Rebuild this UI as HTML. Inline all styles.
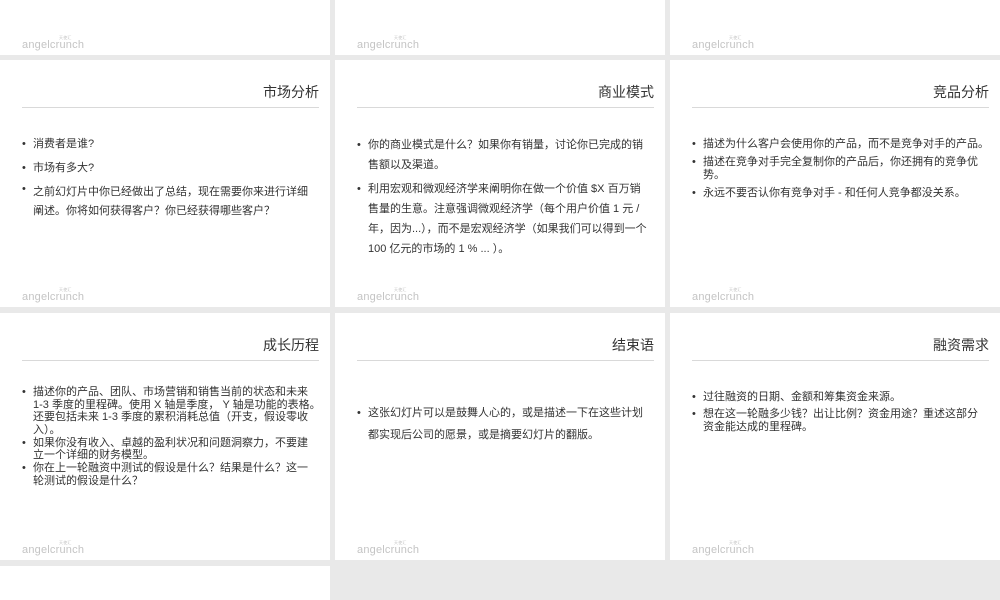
<!DOCTYPE html>
<html><head><meta charset="utf-8"><style>
*{margin:0;padding:0;box-sizing:border-box}
html,body{width:1000px;height:600px;overflow:hidden}
body{background:#e9e9e9;position:relative;font-family:"Liberation Sans","Noto Sans CJK SC",sans-serif;color:#333}
.s{position:absolute;width:330px;height:247px;background:#fff}
.t{position:absolute;right:11px;top:22px;font-size:14px;color:#333}
.ln{position:absolute;left:22px;right:11px;top:47px;height:1px;background:#d9d9d9}
.logo{position:absolute;left:22px;bottom:4px;font-size:11px;color:#c4c4c4;letter-spacing:0.2px}
.logo i{position:absolute;left:37px;top:-4px;font-size:4px;font-style:normal}
ul{position:absolute;left:22px;right:8px;list-style:none;font-size:11px}
li{position:relative;padding-left:11px}
li:before{content:"•";position:absolute;left:0;top:0}
.a li{line-height:24px}
.b li{line-height:13px;margin-bottom:4px;white-space:nowrap}
.c li{line-height:12.5px;margin-bottom:0.5px;white-space:nowrap}
</style></head><body>
<div class="s" style="left:0;top:-192px"><div class="logo">angelcrunch<i>天使汇</i></div></div>
<div class="s" style="left:335px;top:-192px"><div class="logo">angelcrunch<i>天使汇</i></div></div>
<div class="s" style="left:670px;top:-192px"><div class="logo">angelcrunch<i>天使汇</i></div></div>

<div class="s" style="left:0;top:60px"><div class="t">市场分析</div><div class="ln"></div>
<ul class="a" style="top:72px;right:14px"><li>消费者是谁?</li><li>市场有多大?</li><li style="line-height:19px;padding-top:3px">之前幻灯片中你已经做出了总结，现在需要你来进行详细阐述。你将如何获得客户？你已经获得哪些客户？</li></ul>
<div class="logo">angelcrunch<i>天使汇</i></div></div>

<div class="s" style="left:335px;top:60px"><div class="t">商业模式</div><div class="ln"></div>
<ul style="top:75px;right:14px"><li style="line-height:20px;margin-bottom:4px">你的商业模式是什么？如果你有销量，讨论你已完成的销售额以及渠道。</li><li style="line-height:20px">利用宏观和微观经济学来阐明你在做一个价值 $X 百万销售量的生意。注意强调微观经济学（每个用户价值 1 元 / 年，因为...），而不是宏观经济学（如果我们可以得到一个 100 亿元的市场的 1 % ... ）。</li></ul>
<div class="logo">angelcrunch<i>天使汇</i></div></div>

<div class="s" style="left:670px;top:60px"><div class="t">竞品分析</div><div class="ln"></div>
<ul class="b" style="top:78px;right:2px"><li style="margin-bottom:5px">描述为什么客户会使用你的产品，而不是竞争对手的产品。</li><li style="margin-bottom:5px">描述在竞争对手完全复制你的产品后，你还拥有的竞争优<br>势。</li><li>永远不要否认你有竞争对手 - 和任何人竞争都没关系。</li></ul>
<div class="logo">angelcrunch<i>天使汇</i></div></div>

<div class="s" style="left:0;top:313px"><div class="t">成长历程</div><div class="ln"></div>
<ul class="c" style="top:73px;right:6px"><li>描述你的产品、团队、市场营销和销售当前的状态和未来<br>1-3 季度的里程碑。使用 X 轴是季度， Y 轴是功能的表格。<br>还要包括未来 1-3 季度的累积消耗总值（开支，假设零收<br>入）。</li><li>如果你没有收入、卓越的盈利状况和问题洞察力，不要建<br>立一个详细的财务模型。</li><li>你在上一轮融资中测试的假设是什么？结果是什么？这一<br>轮测试的假设是什么？</li></ul>
<div class="logo">angelcrunch<i>天使汇</i></div></div>

<div class="s" style="left:335px;top:313px"><div class="t">结束语</div><div class="ln"></div>
<ul style="top:89px;right:14px"><li style="line-height:22px">这张幻灯片可以是鼓舞人心的，或是描述一下在这些计划都实现后公司的愿景，或是摘要幻灯片的翻版。</li></ul>
<div class="logo">angelcrunch<i>天使汇</i></div></div>

<div class="s" style="left:670px;top:313px"><div class="t">融资需求</div><div class="ln"></div>
<ul class="b" style="top:78px;right:4px"><li>过往融资的日期、金额和筹集资金来源。</li><li>想在这一轮融多少钱？出让比例？资金用途？重述这部分<br>资金能达成的里程碑。</li></ul>
<div class="logo">angelcrunch<i>天使汇</i></div></div>

<div class="s" style="left:0;top:566px;height:34px"></div>
</body></html>
